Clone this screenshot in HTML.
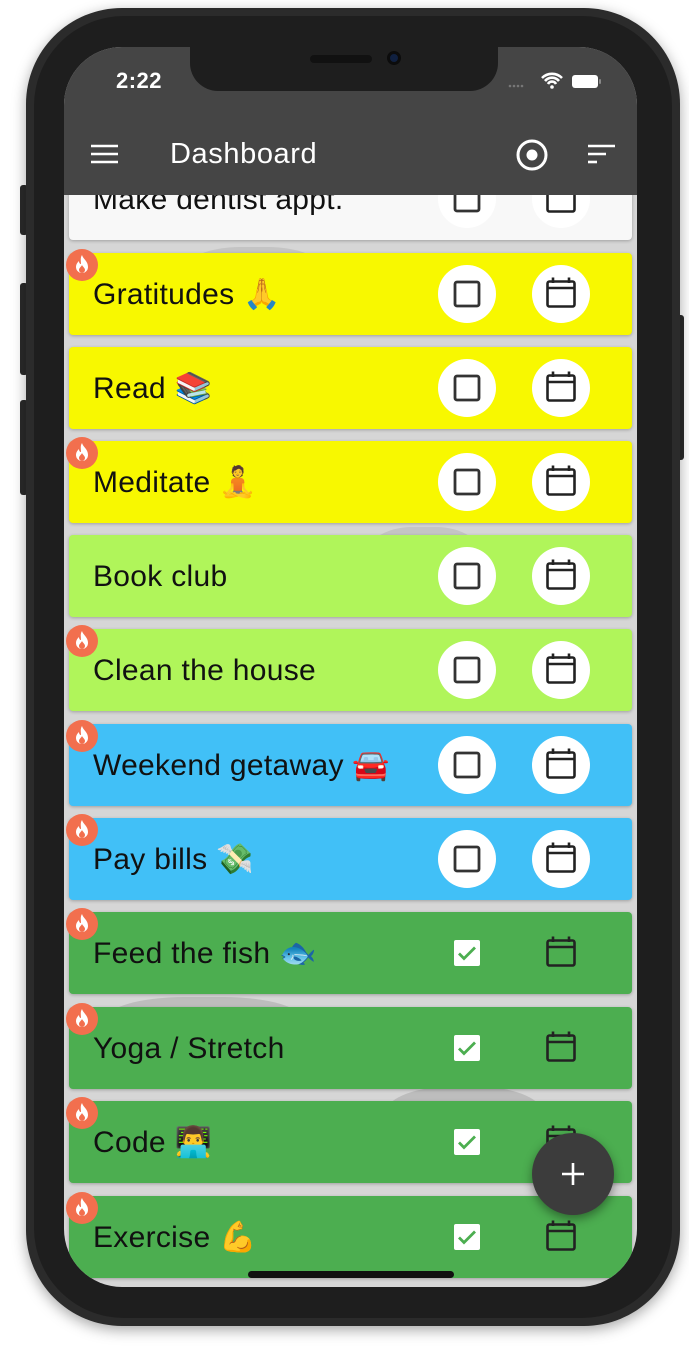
<!DOCTYPE html>
<html><head><meta charset="utf-8"><style>
*{margin:0;padding:0;box-sizing:border-box}
body{width:689px;height:1352px;background:#fff;position:relative;overflow:hidden;font-family:"Liberation Sans","DejaVu Sans",sans-serif}
.abs{position:absolute}
.frame{left:26px;top:8px;width:654px;height:1318px;border-radius:96px;background:#2b2b2b;box-shadow:0 4px 14px rgba(0,0,0,.35)}
.inner{left:34px;top:16px;width:638px;height:1302px;border-radius:90px;background:#1e1e1e}
.btn{background:#2b2b2b;width:8px;border-radius:3px}
.screen{left:64px;top:47px;width:573px;height:1240px;border-radius:58px;overflow:hidden;background:#d6d6d6}
.header{left:0;top:0;width:573px;height:148px;background:#454545;z-index:5}
.notch{left:126px;top:-2px;width:308px;height:46px;background:#1e1e1e;border-radius:0 0 28px 28px;z-index:6}
.card{left:5px;width:563px;height:82px;border-radius:4px;box-shadow:0 1px 3px rgba(0,0,0,.25)}
.lbl{left:24px;top:1px;line-height:82px;font-size:30px;letter-spacing:0.3px;color:#111;white-space:nowrap}
.circ{width:58px;height:58px;border-radius:50%;background:#fff;top:12px}
.fire{width:32px;height:32px;border-radius:50%;background:#f26f4e;left:2px;z-index:3}
.blob{background:#bcbcbc;border-radius:40%}
</style></head><body>
<div class="abs btn" style="left:20px;top:185px;height:50px"></div>
<div class="abs btn" style="left:20px;top:283px;height:92px"></div>
<div class="abs btn" style="left:20px;top:400px;height:95px"></div>
<div class="abs btn" style="left:676px;top:315px;height:145px"></div>
<div class="abs frame"></div>
<div class="abs inner"></div>
<div class="abs screen">
  <div class="abs blob" style="left:120px;top:200px;width:140px;height:60px;background:#c4c4c4"></div>
  <div class="abs blob" style="left:300px;top:480px;width:120px;height:80px;background:#c4c4c4"></div>
  <div class="abs blob" style="left:40px;top:950px;width:200px;height:60px;background:#bdbdbd"></div>
  <div class="abs blob" style="left:320px;top:1040px;width:160px;height:70px;background:#bdbdbd"></div>
  <div id="list"></div>
  <div class="abs header">
    <div class="abs" style="left:52px;top:21px;color:#fff;font-size:22px;font-weight:600;letter-spacing:0.5px">2:22</div>
    <svg class="abs" style="left:444px;top:23px" width="130" height="20" viewBox="0 0 130 20">
      <g fill="#777"><circle cx="2" cy="16" r="1.3"/><circle cx="6" cy="16" r="1.3"/><circle cx="10" cy="16" r="1.3"/><circle cx="14" cy="16" r="1.3"/></g>
      <path d="M34 8a14 14 0 0 1 20 0M37 11a9 9 0 0 1 14 0M40 14a4.5 4.5 0 0 1 8 0" stroke="#fff" stroke-width="2.6" fill="none"/><circle cx="44" cy="17" r="1.8" fill="#fff"/>
      <rect x="64" y="5" width="26" height="13" rx="3" fill="#fff"/><rect x="91" y="9" width="2" height="5" rx="1" fill="#888"/>
    </svg>
    <svg class="abs" style="left:27px;top:97px" width="28" height="20"><g stroke="#fff" stroke-width="2.6"><line x1="0" y1="2" x2="27" y2="2"/><line x1="0" y1="10" x2="27" y2="10"/><line x1="0" y1="18" x2="27" y2="18"/></g></svg>
    <div class="abs" style="left:106px;top:91px;color:#fff;font-size:29px;letter-spacing:0.6px">Dashboard</div>
    <svg class="abs" style="left:451px;top:91px" width="34" height="34"><circle cx="17" cy="17" r="14" stroke="#fff" stroke-width="3" fill="none"/><circle cx="17" cy="17" r="5.5" fill="#fff"/></svg>
    <svg class="abs" style="left:524px;top:97px" width="28" height="20"><g stroke="#fff" stroke-width="2.6"><line x1="0" y1="2" x2="27" y2="2"/><line x1="0" y1="10" x2="18" y2="10"/><line x1="0" y1="18" x2="9" y2="18"/></g></svg>
  </div>
  <div class="abs notch">
    <div class="abs" style="left:120px;top:10px;width:62px;height:8px;border-radius:4px;background:#111"></div>
    <div class="abs" style="left:197px;top:6px;width:14px;height:14px;border-radius:50%;background:#102040;border:3px solid #0c0c0c"></div>
  </div>
  <div class="abs" style="left:468px;top:1086px;width:82px;height:82px;border-radius:50%;background:#3c3c3c;box-shadow:0 4px 10px rgba(0,0,0,.4);z-index:4">
    <svg class="abs" style="left:29px;top:29px" width="24" height="24"><g stroke="#fff" stroke-width="2.6"><line x1="12" y1="1" x2="12" y2="23"/><line x1="1" y1="12" x2="23" y2="12"/></g></svg>
  </div>
  <div class="abs" style="left:184px;top:1224px;width:206px;height:7px;border-radius:4px;background:#111;z-index:4"></div>
</div>
<script>
const rows=[
["Make dentist appt.","#f8f8f8",0,111,0],
["Gratitudes 🙏","#f8f800",1,206,0],
["Read 📚","#f8f800",0,300,0],
["Meditate 🧘","#f8f800",1,394,0],
["Book club","#b0f55a",0,488,0],
["Clean the house","#b0f55a",1,582,0],
["Weekend getaway 🚘","#41c0f7",1,677,0],
["Pay bills 💸","#41c0f7",1,771,0],
["Feed the fish 🐟","#4cae50",1,865,1],
["Yoga / Stretch","#4cae50",1,960,1],
["Code 👨‍💻","#4cae50",1,1054,1],
["Exercise 💪","#4cae50",1,1149,1]];
const box='<svg width="32" height="32" viewBox="0 0 32 32"><rect x="4" y="4" width="24" height="24" rx="2" fill="none" stroke="#333" stroke-width="2.8"/></svg>';
const cal='<svg width="34" height="34" viewBox="0 0 34 34"><rect x="3.5" y="5.5" width="27" height="25" rx="2" fill="none" stroke="#222" stroke-width="2.6"/><line x1="3.5" y1="12" x2="30.5" y2="12" stroke="#222" stroke-width="2.6"/><line x1="9" y1="1.5" x2="9" y2="7" stroke="#222" stroke-width="2.6"/><line x1="25" y1="1.5" x2="25" y2="7" stroke="#222" stroke-width="2.6"/></svg>';
const chk='<svg width="28" height="28" viewBox="0 0 28 28"><rect x="1" y="1" width="26" height="26" rx="2" fill="#fff"/><path d="M6 14.5l5 5 11-11" stroke="#4cae50" stroke-width="2.8" fill="none"/></svg>';
let h='';
for(const [t,c,f,y,done] of rows){
 h+=`<div class="abs card" style="top:${y}px;background:${c}">
 <div class="abs lbl">${t}</div>`;
 if(!done){
  h+=`<div class="abs circ" style="left:369px"><div class="abs" style="left:13px;top:13px">${box}</div></div>
  <div class="abs circ" style="left:463px"><div class="abs" style="left:12px;top:11px">${cal}</div></div>`;
 }else{
  h+=`<div class="abs" style="left:384px;top:27px">${chk}</div><div class="abs" style="left:475px;top:23px">${cal}</div>`;
 }
 h+=`</div>`;
 if(f) h+=`<div class="abs fire" style="top:${y-4}px"><svg width="32" height="32" viewBox="0 0 32 32"><path d="M16 6c1 4 6 6 6 12a6 6 0 0 1-12 0c0-3 2-5 3-6 0 2 1 3 2 3 0-3-1-6 1-9z" fill="#fff"/><path d="M16 16c1 2 3 3 3 5a3 3 0 0 1-6 0c0-2 2-3 3-5z" fill="#f26f4e"/></svg></div>`;
}
document.getElementById('list').outerHTML=h;
</script>
</body></html>
